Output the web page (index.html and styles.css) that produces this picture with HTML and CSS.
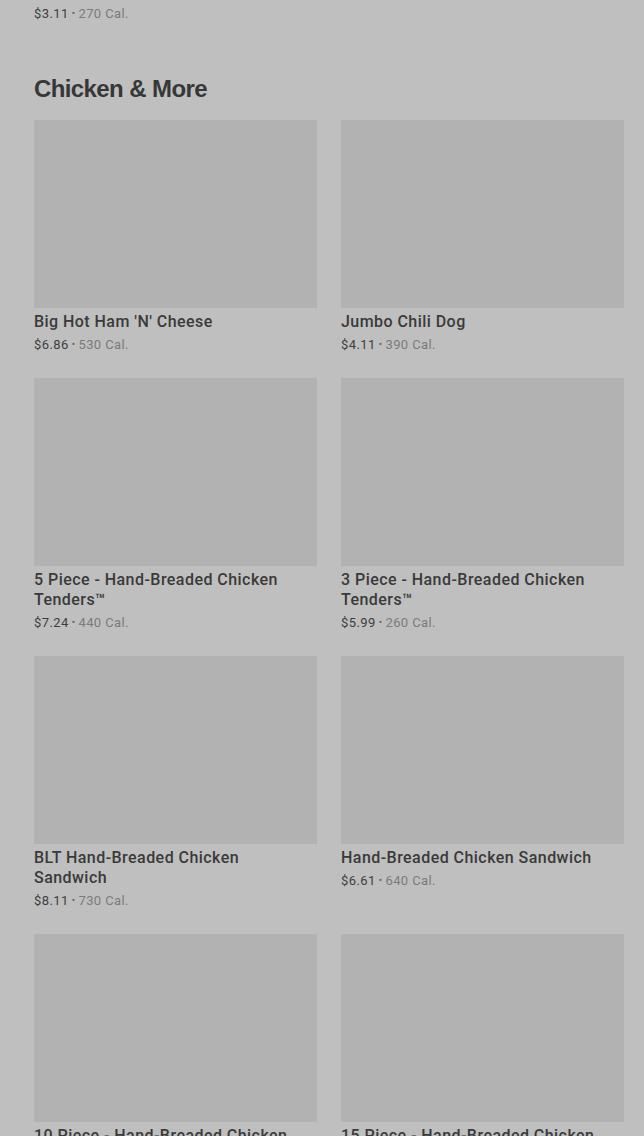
FILE: index.html
```html
<!DOCTYPE html>
<html>
<head>
<meta charset="utf-8">
<link rel="stylesheet" href="styles.css">
</head>
<body>
<div class="page">
  <div class="prev-meta"><span class="price">$3.11</span><span class="dot">•</span><span class="cal">270 Cal.</span></div>
  <section class="section">
    <h2 class="section-title">Chicken &amp; More</h2>
    <div class="grid">
      <div class="card">
        <div class="thumb"></div>
        <div class="name">Big Hot Ham 'N' Cheese</div>
        <div class="meta"><span class="price">$6.86</span><span class="dot">•</span><span class="cal">530 Cal.</span></div>
      </div>
      <div class="card">
        <div class="thumb"></div>
        <div class="name">Jumbo Chili Dog</div>
        <div class="meta"><span class="price">$4.11</span><span class="dot">•</span><span class="cal">390 Cal.</span></div>
      </div>
      <div class="card">
        <div class="thumb"></div>
        <div class="name">5 Piece - Hand-Breaded Chicken Tenders™</div>
        <div class="meta"><span class="price">$7.24</span><span class="dot">•</span><span class="cal">440 Cal.</span></div>
      </div>
      <div class="card">
        <div class="thumb"></div>
        <div class="name">3 Piece - Hand-Breaded Chicken Tenders™</div>
        <div class="meta"><span class="price">$5.99</span><span class="dot">•</span><span class="cal">260 Cal.</span></div>
      </div>
      <div class="card">
        <div class="thumb"></div>
        <div class="name">BLT Hand-Breaded Chicken Sandwich</div>
        <div class="meta"><span class="price">$8.11</span><span class="dot">•</span><span class="cal">730 Cal.</span></div>
      </div>
      <div class="card">
        <div class="thumb"></div>
        <div class="name">Hand-Breaded Chicken Sandwich</div>
        <div class="meta"><span class="price">$6.61</span><span class="dot">•</span><span class="cal">640 Cal.</span></div>
      </div>
      <div class="card">
        <div class="thumb"></div>
        <div class="name">10 Piece - Hand-Breaded Chicken Tenders™</div>
        <div class="meta"><span class="price">$13.99</span><span class="dot">•</span><span class="cal">880 Cal.</span></div>
      </div>
      <div class="card">
        <div class="thumb"></div>
        <div class="name">15 Piece - Hand-Breaded Chicken Tenders™</div>
        <div class="meta"><span class="price">$19.99</span><span class="dot">•</span><span class="cal">1320 Cal.</span></div>
      </div>
    </div>
  </section>
</div>
</body>
</html>
```

FILE: styles.css
```css
html, body {
  margin: 0;
  padding: 0;
  background: #bfbfbf;
  overflow: hidden;
}
body {
  font-family: Roboto, "Liberation Sans", Arial, sans-serif;
  color: #3b3b3b;
}
.page {
  padding: 4px 20px 0 34px;
}
.prev-meta, .meta {
  display: flex;
  align-items: center;
  height: 20px;
  font-size: 13px;
  line-height: 20px;
  letter-spacing: 0.4px;
}
.price {
  color: #3e3e3e;
}
.dot {
  color: #666666;
  font-size: 10px;
  margin: 0 3px;
}
.cal {
  color: #7b7b7b;
}
.section {
  margin-top: 48px;
}
.section-title {
  margin: 0 0 14px 0;
  font-family: "Liberation Sans", Arial, sans-serif;
  font-weight: 700;
  font-size: 24px;
  line-height: 34px;
  letter-spacing: -0.6px;
  color: #373737;
}
.grid {
  display: grid;
  grid-template-columns: 283px 283px;
  column-gap: 24px;
  row-gap: 23px;
  align-items: start;
}
.card {
  display: flex;
  flex-direction: column;
}
.thumb {
  height: 188px;
  background: #b2b2b2;
  margin-bottom: 4px;
}
.name {
  font-size: 16px;
  font-weight: 500;
  line-height: 20px;
  letter-spacing: 0.45px;
  color: #3a3a3a;
  padding-right: 20px;
}
.meta {
  margin-top: 3px;
}
```
